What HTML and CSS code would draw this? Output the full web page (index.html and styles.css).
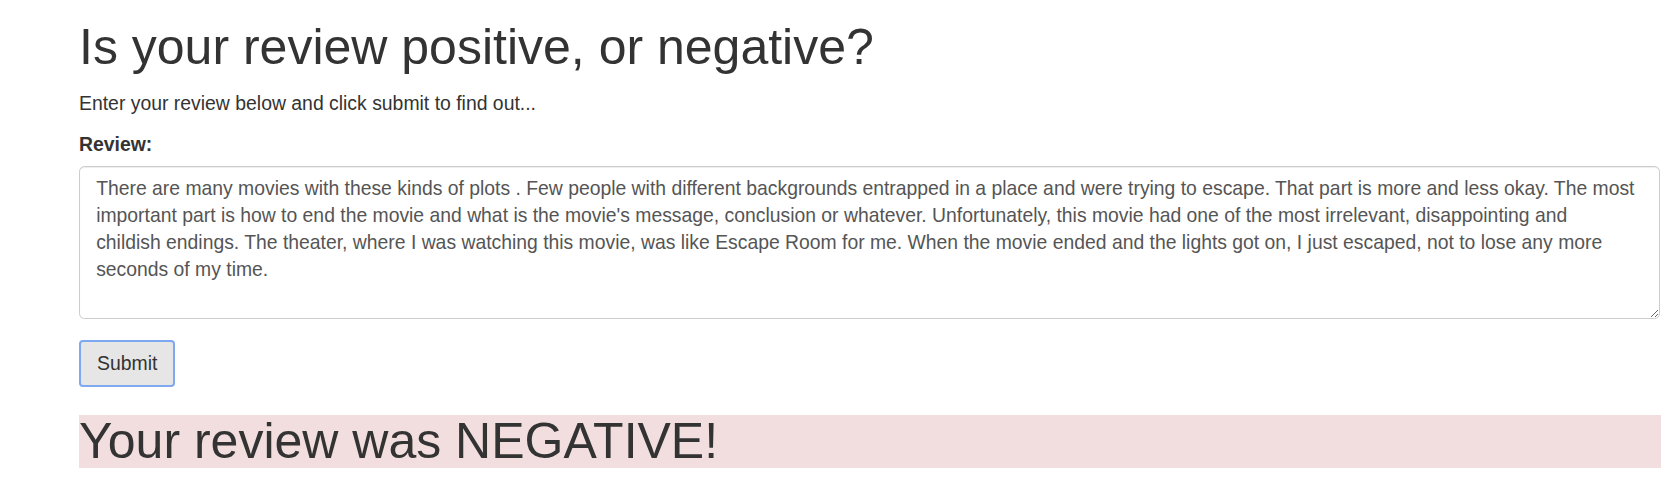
FILE: index.html
```html
<!DOCTYPE html>
<html lang="en">
<head>
<meta charset="utf-8">
<title>Sentiment</title>
<link rel="stylesheet" href="styles.css">
</head>
<body>
<div class="container">
  <h1 class="title">Is your review positive, or negative?</h1>
  <p class="lead-text">Enter your review below and click submit to find out...</p>
  <form class="review-form">
    <div class="form-group">
      <label class="field-label" for="review">Review:</label>
      <textarea class="review-input" id="review" rows="5">There are many movies with these kinds of plots . Few people with different backgrounds entrapped in a place and were trying to escape. That part is more and less okay. The most
important part is how to end the movie and what is the movie's message, conclusion or whatever. Unfortunately, this movie had one of the most irrelevant, disappointing and
childish endings. The theater, where I was watching this movie, was like Escape Room for me. When the movie ended and the lights got on, I just escaped, not to lose any more
seconds of my time.</textarea>
    </div>
    <button type="button" class="submit-btn">Submit</button>
  </form>
  <h1 class="result result-negative">Your review was NEGATIVE!</h1>
</div>
</body>
</html>
```

FILE: styles.css
```css
html, body {
  margin: 0;
  padding: 0;
  background: #fff;
}

body {
  font-family: "Liberation Sans", Arial, Helvetica, sans-serif;
  font-size: 19.4px;
  line-height: 27px;
  color: #333;
}

.container {
  padding-left: 79px;
  padding-right: 0;
  overflow: hidden;
}

.title {
  margin: 21px 0 15px;
  font-size: 50px;
  line-height: 53.5px;
  font-weight: 500;
  color: #333;
}

.lead-text {
  margin: 0 0 14.5px;
}

.review-form {
  margin: 0;
}

.form-group {
  margin-bottom: 21px;
}

.field-label {
  display: inline-block;
  margin-bottom: 7.5px;
  font-weight: bold;
}

.review-input {
  display: block;
  box-sizing: border-box;
  width: 1581px;
  height: 153.5px;
  margin: 0;
  padding: 8px 16.2px;
  font-family: "Liberation Sans", Arial, Helvetica, sans-serif;
  font-size: 19.35px;
  line-height: 27px;
  color: #555;
  background: #fff;
  border: 1.35px solid #ccc;
  border-radius: 5.4px;
  box-shadow: inset 0 1px 1px rgba(0, 0, 0, 0.075);
  resize: vertical;
  overflow: hidden;
  white-space: pre-wrap;
}

.submit-btn {
  display: inline-block;
  box-sizing: border-box;
  height: 46.5px;
  margin: 0;
  padding: 0 16px;
  font-family: "Liberation Sans", Arial, Helvetica, sans-serif;
  font-size: 19.4px;
  line-height: 27px;
  color: #333;
  background: #e6e6e6;
  border: 2px solid #7ea9f0;
  border-radius: 4px;
  cursor: pointer;
}

.result {
  margin: 28px 0 0;
  font-size: 50px;
  line-height: 53.5px;
  font-weight: 500;
  color: #333;
}

.result-negative {
  background: #f2dede;
}
```
